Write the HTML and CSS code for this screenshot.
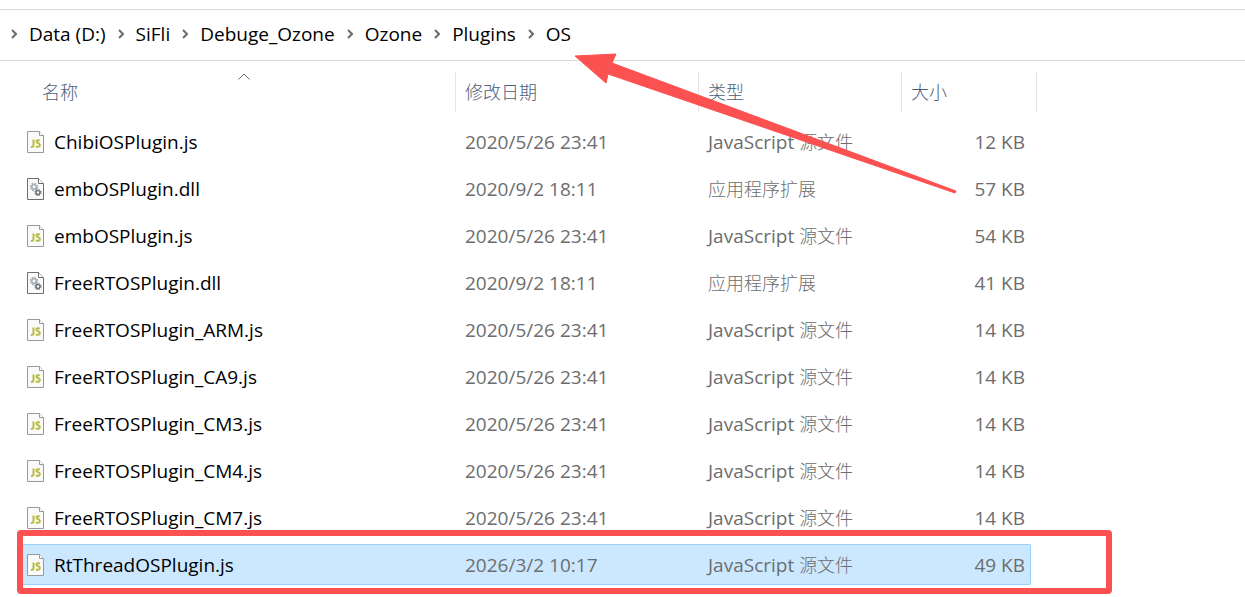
FILE: index.html
```html
<!DOCTYPE html>
<html lang="zh-CN">
<head>
    <meta charset="UTF-8">
    <meta name="viewport" content="width=device-width, initial-scale=1.0">
    <title>OS</title>
    <link rel="stylesheet" href="styles.css">
</head>
<body>
    <!-- 图标定义 -->
    <svg class="icon-defs" aria-hidden="true">
        <symbol id="icon-chevron" viewBox="0 0 6 10">
            <path d="M1 1l4 4-4 4" fill="none" stroke="#6b6b6b" stroke-width="2"/>
        </symbol>
        <symbol id="icon-js" viewBox="0 0 17 22">
            <path d="M.5.5h12l4 4v17H.5z" fill="#fafafa" stroke="#999"/>
            <path d="M12.500.5v4h4" fill="#fff" stroke="#999"/>
            <path d="M6.500 8.500v5.500c0 1.600-.9 2.200-2.700 1.700M12.900 9.600c-1.600-.8-3.500-.5-3.500.9 0 1.800 3.500 1.500 3.500 3.500 0 1.900-2.300 2.200-4.100 1.300" fill="none" stroke="#b7bb43" stroke-width="2"/>
        </symbol>
        <symbol id="icon-dll" viewBox="0 0 17 22">
            <path d="M.5.5h11l5 5v16H.5z" fill="#fafafa" stroke="#6e6e6e"/>
            <path d="M11.500.5v5h5" fill="#fff" stroke="#6e6e6e"/>
            <circle cx="7" cy="9" r="3.400" fill="none" stroke="#a3adb8" stroke-width="1.600" stroke-dasharray="1.600 1.070"/>
            <circle cx="7" cy="9" r="2.200" fill="none" stroke="#a3adb8" stroke-width="1.500"/>
            <circle cx="11" cy="14.500" r="2.900" fill="none" stroke="#66717c" stroke-width="1.300" stroke-dasharray="1.300 .98"/>
            <circle cx="11" cy="14.500" r="1.900" fill="none" stroke="#66717c" stroke-width="1.300"/>
        </symbol>
    </svg>

    <!-- 地址栏 -->
    <nav class="address-bar">
        <svg class="chevron"><use href="#icon-chevron"/></svg>
        <a href="#">Data (D:)</a>
        <svg class="chevron"><use href="#icon-chevron"/></svg>
        <a href="#">SiFli</a>
        <svg class="chevron"><use href="#icon-chevron"/></svg>
        <a href="#">Debuge_Ozone</a>
        <svg class="chevron"><use href="#icon-chevron"/></svg>
        <a href="#">Ozone</a>
        <svg class="chevron"><use href="#icon-chevron"/></svg>
        <a href="#">Plugins</a>
        <svg class="chevron"><use href="#icon-chevron"/></svg>
        <a href="#">OS</a>
    </nav>

    <!-- 文件列表 -->
    <main class="file-view">
        <table class="file-list">
            <colgroup>
                <col class="col-name">
                <col class="col-date">
                <col class="col-type">
                <col class="col-size">
                <col class="col-end">
            </colgroup>
            <thead>
                <tr>
                    <th class="head-name">
                        <button type="button">名称
                            <svg class="sort-mark" viewBox="0 0 12 7"><path d="M.5 6.500L6 1l5.500 5.500" fill="none" stroke="#6b6b6b"/></svg>
                        </button>
                    </th>
                    <th><button type="button">修改日期</button></th>
                    <th><button type="button">类型</button></th>
                    <th colspan="2"><button type="button">大小</button></th>
                </tr>
            </thead>
            <tbody>
                <tr>
                    <td><div class="file-name"><svg class="file-icon"><use href="#icon-js"/></svg>ChibiOSPlugin.js</div></td>
                    <td>2020/5/26 23:41</td>
                    <td>JavaScript <span class="zh">源文件</span></td>
                    <td class="size">12 KB</td>
                </tr>
                <tr>
                    <td><div class="file-name"><svg class="file-icon"><use href="#icon-dll"/></svg>embOSPlugin.dll</div></td>
                    <td>2020/9/2 18:11</td>
                    <td><span class="zh">应用程序扩展</span></td>
                    <td class="size">57 KB</td>
                </tr>
                <tr>
                    <td><div class="file-name"><svg class="file-icon"><use href="#icon-js"/></svg>embOSPlugin.js</div></td>
                    <td>2020/5/26 23:41</td>
                    <td>JavaScript <span class="zh">源文件</span></td>
                    <td class="size">54 KB</td>
                </tr>
                <tr>
                    <td><div class="file-name"><svg class="file-icon"><use href="#icon-dll"/></svg>FreeRTOSPlugin.dll</div></td>
                    <td>2020/9/2 18:11</td>
                    <td><span class="zh">应用程序扩展</span></td>
                    <td class="size">41 KB</td>
                </tr>
                <tr>
                    <td><div class="file-name"><svg class="file-icon"><use href="#icon-js"/></svg>FreeRTOSPlugin_ARM.js</div></td>
                    <td>2020/5/26 23:41</td>
                    <td>JavaScript <span class="zh">源文件</span></td>
                    <td class="size">14 KB</td>
                </tr>
                <tr>
                    <td><div class="file-name"><svg class="file-icon"><use href="#icon-js"/></svg>FreeRTOSPlugin_CA9.js</div></td>
                    <td>2020/5/26 23:41</td>
                    <td>JavaScript <span class="zh">源文件</span></td>
                    <td class="size">14 KB</td>
                </tr>
                <tr>
                    <td><div class="file-name"><svg class="file-icon"><use href="#icon-js"/></svg>FreeRTOSPlugin_CM3.js</div></td>
                    <td>2020/5/26 23:41</td>
                    <td>JavaScript <span class="zh">源文件</span></td>
                    <td class="size">14 KB</td>
                </tr>
                <tr>
                    <td><div class="file-name"><svg class="file-icon"><use href="#icon-js"/></svg>FreeRTOSPlugin_CM4.js</div></td>
                    <td>2020/5/26 23:41</td>
                    <td>JavaScript <span class="zh">源文件</span></td>
                    <td class="size">14 KB</td>
                </tr>
                <tr>
                    <td><div class="file-name"><svg class="file-icon"><use href="#icon-js"/></svg>FreeRTOSPlugin_CM7.js</div></td>
                    <td>2020/5/26 23:41</td>
                    <td>JavaScript <span class="zh">源文件</span></td>
                    <td class="size">14 KB</td>
                </tr>
                <tr class="selected">
                    <td><div class="file-name"><svg class="file-icon"><use href="#icon-js"/></svg>RtThreadOSPlugin.js</div></td>
                    <td>2026/3/2 10:17</td>
                    <td>JavaScript <span class="zh">源文件</span></td>
                    <td class="size">49 KB</td>
                </tr>
            </tbody>
        </table>

        <!-- 标注：红框和箭头 -->
        <div class="mark-box"></div>
        <svg class="mark-arrow" viewBox="0 0 384 142" aria-hidden="true">
            <path d="M1 3L42 1L38 10L382 138L381 140L34 21L32 30Z" fill="#fc5151" stroke="#fc5151" stroke-linejoin="round"/>
        </svg>
    </main>
</body>
</html>
```

FILE: styles.css
```css
* {
    box-sizing: border-box;
}

body {
    margin: 0;
    padding-top: 9px;
    background-color: #fff;
    color: #000;
    font-family: "Open Sans", "Noto Sans CJK SC", sans-serif;
    font-size: 19px;
    line-height: 26px;
}

.icon-defs {
    position: absolute;
    width: 0;
    height: 0;
}

/* 地址栏 */
.address-bar {
    display: flex;
    align-items: center;
    gap: 12px;
    height: 52px;
    padding: 0 0 2px 11px;
    border-top: 1px solid #d9d9d9;
    border-bottom: 1px solid #d9d9d9;
}

.address-bar a {
    color: #000;
    text-decoration: none;
}

.chevron {
    flex: none;
    width: 6px;
    height: 10px;
}

/* 文件列表 */
.file-view {
    position: relative;
    padding: 5px 0 6px 22px;
}

.file-list {
    width: 1015px;
    table-layout: fixed;
    border-collapse: separate;
    border-spacing: 0 6px;
}

.col-name {
    width: 434px;
}

.col-date {
    width: 243px;
}

.col-type {
    width: 203px;
}

.col-size {
    width: 129px;
}

.col-end {
    width: 6px;
}

.file-list th {
    padding: 0 0 3px;
}

.file-list .head-name {
    padding-left: 11px;
}

.file-list th button {
    position: relative;
    display: block;
    width: 100%;
    height: 40px;
    padding: 0 9px 2px;
    border: 0;
    border-right: 1px solid #e5e5e5;
    background: none;
    color: #4c607a;
    font-family: inherit;
    font-size: 18px;
    font-weight: 300;
    text-align: left;
}

.sort-mark {
    position: absolute;
    top: 1px;
    left: 50%;
    width: 12px;
    height: 7px;
    margin-left: -6px;
}

.file-list tbody td {
    height: 41px;
    padding: 0 9px;
    border: 1px solid transparent;
    border-width: 1px 0;
    color: #6d6d6d;
    white-space: nowrap;
}

.file-list tbody td:first-child {
    padding-left: 5px;
    color: #000;
}

.file-list tbody .size {
    padding-right: 6px;
    text-align: right;
}

.file-name {
    display: flex;
    align-items: center;
    gap: 10px;
}

.file-icon {
    flex: none;
    width: 17px;
    height: 22px;
}

.zh {
    font-size: 18px;
    font-weight: 300;
}

.file-list .selected td {
    border-color: #99d1ff;
    background-color: #cce8ff;
}

.file-list .selected td:last-child {
    padding-right: 5px;
    border-right-width: 1px;
    border-radius: 0 2px 2px 0;
}

/* 标注 */
.mark-box {
    position: absolute;
    bottom: 3px;
    left: 17px;
    width: 1095px;
    height: 64px;
    border: 6px solid #fc5151;
    border-radius: 4px;
}

.mark-arrow {
    position: absolute;
    top: -8px;
    left: 574px;
    width: 384px;
    height: 142px;
}
```
